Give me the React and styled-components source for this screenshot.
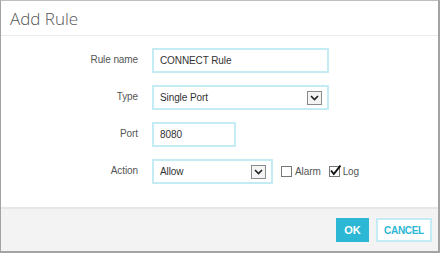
import React from 'react';
import styled, { createGlobalStyle } from 'styled-components';

const Global = createGlobalStyle`
  html, body {
    margin: 0;
    padding: 0;
    background: #fff;
  }
  * {
    box-sizing: border-box;
  }
`;

function Arrow() {
  return (
    <svg width="9" height="6" viewBox="0 0 9 6">
      <path d="M1 1 L4.5 4.5 L8 1" fill="none" stroke="#222" strokeWidth="1.6" />
    </svg>
  );
}

function Tick() {
  return (
    <svg width="12" height="12" viewBox="0 0 12 12">
      <path d="M2 5.5 L4.8 9 L11.5 0.5" fill="none" stroke="#111" strokeWidth="1.9" />
    </svg>
  );
}

function App() {
  return (
    <>
      <Global />
      <Dialog>
        <Header>
          <Title>Add Rule</Title>
        </Header>
        <Body>
          <Row>
            <Label>Rule name</Label>
            <Field $width={177}>CONNECT Rule</Field>
          </Row>
          <Row>
            <Label>Type</Label>
            <Field $width={177}>
              Single Port
              <ArrowBox>
                <Arrow />
              </ArrowBox>
            </Field>
          </Row>
          <Row>
            <Label>Port</Label>
            <Field $width={84}>8080</Field>
          </Row>
          <Row>
            <Label>Action</Label>
            <Field $width={121}>
              Allow
              <ArrowBox>
                <Arrow />
              </ArrowBox>
            </Field>
            <Check>
              <Box />
              Alarm
            </Check>
            <Check>
              <Box>
                <TickMark>
                  <Tick />
                </TickMark>
              </Box>
              Log
            </Check>
          </Row>
        </Body>
        <Footer>
          <OkButton>OK</OkButton>
          <CancelButton>CANCEL</CancelButton>
        </Footer>
      </Dialog>
    </>
  );
}

export default App;

const Dialog = styled.div`
  width: 440px;
  height: 253px;
  display: flex;
  flex-direction: column;
  border-left: 1px solid #a3a3a3;
  border-top: 1px solid #bdbdbd;
  border-right: 2px solid #a3a3a3;
  border-bottom: 2px solid #a3a3a3;
  background: #fff;
  font-family: 'Liberation Sans', Arial, sans-serif;
`;

const Header = styled.div`
  height: 35px;
  padding: 6px 0 0 9px;
  border-bottom: 1px solid #ececec;
`;

const Title = styled.h1`
  margin: 0;
  font-family: 'Open Sans', 'Lato', sans-serif;
  font-weight: 300;
  font-size: 17px;
  line-height: 24px;
  color: #555;
`;

const Body = styled.div`
  flex: 1;
  display: flex;
  flex-direction: column;
  gap: 12px;
  padding-top: 12px;
`;

const Row = styled.div`
  display: flex;
  align-items: center;
  height: 25px;
`;

const Label = styled.div`
  width: 137px;
  text-align: right;
  font-size: 10px;
  letter-spacing: -0.1px;
  color: #555;
  margin-right: 14px;
  position: relative;
  top: -1px;
`;

const Field = styled.div`
  width: ${p => p.$width}px;
  height: 25px;
  display: flex;
  align-items: center;
  justify-content: space-between;
  padding: 0 5px 0 6px;
  border: 2px solid #c4ecf4;
  font-size: 10px;
  letter-spacing: -0.1px;
  color: #333;
`;

const ArrowBox = styled.div`
  width: 15px;
  height: 14px;
  display: flex;
  align-items: center;
  justify-content: center;
  border: 1px solid #8a8a8a;
  background: #f4f4f4;
`;

const Check = styled.div`
  display: flex;
  align-items: center;
  gap: 3px;
  margin-left: 8px;
  font-size: 10px;
  letter-spacing: -0.1px;
  color: #555;
`;

const Box = styled.div`
  position: relative;
  width: 11px;
  height: 11px;
  border: 1px solid #777;
  background: #fff;
`;

const TickMark = styled.div`
  position: absolute;
  left: -1px;
  top: -2px;
  display: flex;
`;

const Footer = styled.div`
  height: 44px;
  display: flex;
  justify-content: flex-end;
  align-items: center;
  gap: 7px;
  padding: 0 6px 0 0;
  background: #f3f3f3;
  border-top: 2px solid #e6e6e6;
`;

const OkButton = styled.button`
  width: 33px;
  height: 24px;
  border: none;
  background: #2cb7d5;
  color: #fff;
  font-family: 'Liberation Sans', Arial, sans-serif;
  font-size: 11px;
  font-weight: 700;
  padding: 0;
`;

const CancelButton = styled.button`
  width: 56px;
  height: 24px;
  border: 2px solid #c4ecf4;
  background: #fff;
  color: #2cb7d5;
  font-family: 'Liberation Sans', Arial, sans-serif;
  font-size: 10px;
  font-weight: 700;
  padding: 0;
  letter-spacing: -0.3px;
`;
